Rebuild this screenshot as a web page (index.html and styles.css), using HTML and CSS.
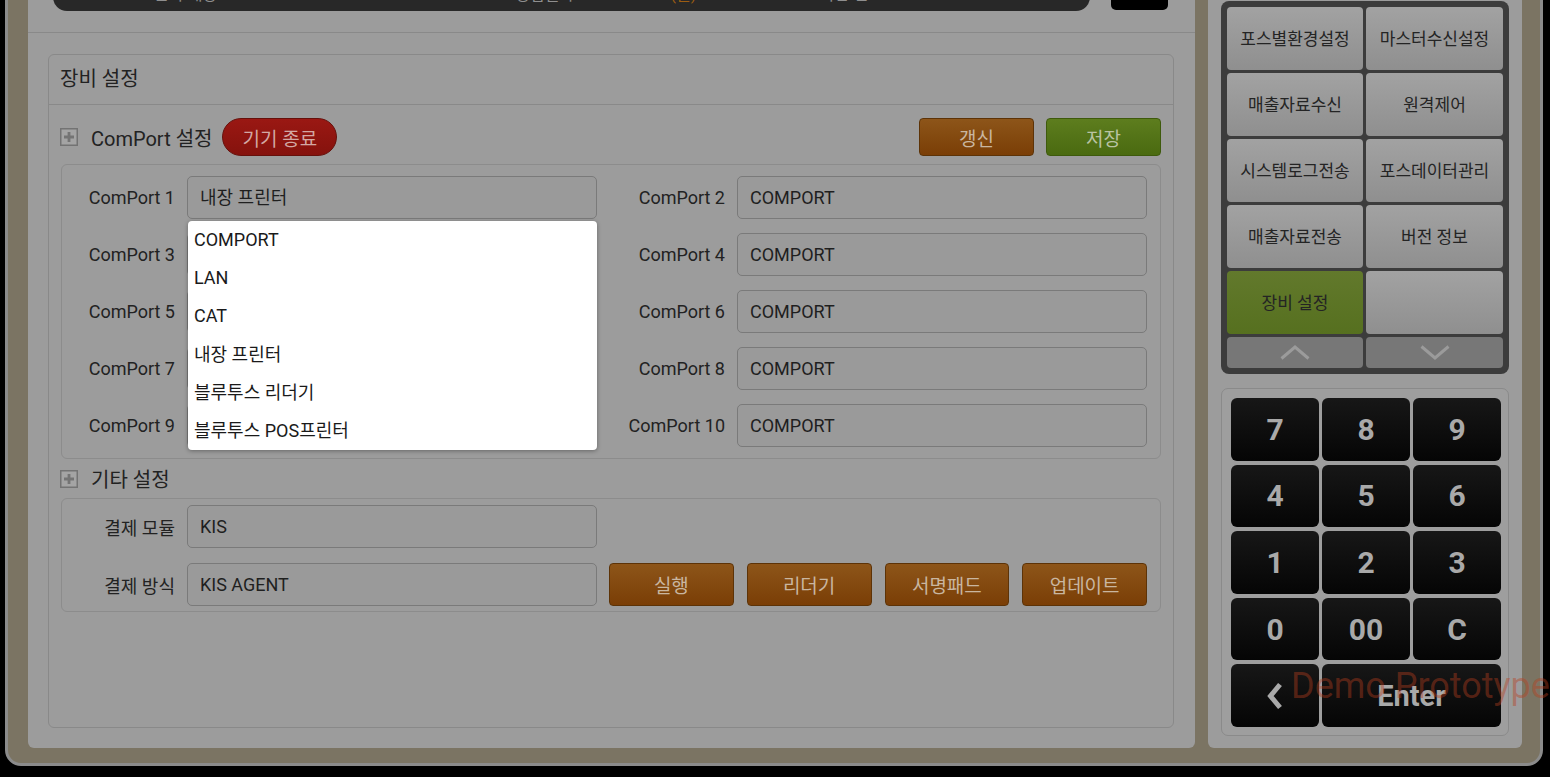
FILE: index.html
```html
<!DOCTYPE html>
<html lang="ko">
<head>
  <meta charset="UTF-8" />
  <meta name="viewport" content="width=device-width, initial-scale=1.0" />
  <title>장비 설정</title>
  <link rel="stylesheet" href="styles.css">
</head>
<body>
  <div class="frame">
    <div class="main">
      <div class="main-head">
        <div class="topbar">
          <span class="bar-left">POS 01 : 본사 매장</span>
          <span class="bar-mid">영업일자 : <em>2024-05-20 (월)</em></span>
          <span class="bar-right">마감 전</span>
        </div>
        <div class="topbox"></div>
      </div>

      <div class="panel">
        <div class="panel-title">장비 설정</div>
        <div class="panel-body">
          <div class="section-head">
            <svg class="plus" width="18" height="18" viewBox="0 0 18 18">
              <rect x="0.75" y="0.75" width="16.5" height="16.5" fill="#a4a4a4" stroke="#737373" stroke-width="1.5" />
              <path d="M9 4v10M4 9h10" stroke="#747474" stroke-width="2.8" />
            </svg>
            <span class="section-name">ComPort 설정</span>
            <button class="pill">기기 종료</button>
            <div class="head-actions">
              <button class="btn orange">갱신</button>
              <button class="btn green">저장</button>
            </div>
          </div>

          <div class="port-box">
            <label>ComPort 1</label>
            <div class="field open">내장 프린터
              <ul class="dropdown">
                <li>COMPORT</li>
                <li>LAN</li>
                <li>CAT</li>
                <li>내장 프린터</li>
                <li>블루투스 리더기</li>
                <li>블루투스 POS프린터</li>
              </ul>
            </div>
            <label>ComPort 2</label>
            <div class="field">COMPORT</div>
            <label>ComPort 3</label>
            <div class="field">COMPORT</div>
            <label>ComPort 4</label>
            <div class="field">COMPORT</div>
            <label>ComPort 5</label>
            <div class="field">COMPORT</div>
            <label>ComPort 6</label>
            <div class="field">COMPORT</div>
            <label>ComPort 7</label>
            <div class="field">COMPORT</div>
            <label>ComPort 8</label>
            <div class="field">COMPORT</div>
            <label>ComPort 9</label>
            <div class="field">COMPORT</div>
            <label>ComPort 10</label>
            <div class="field">COMPORT</div>
          </div>

          <div class="section-head plain">
            <svg class="plus" width="18" height="18" viewBox="0 0 18 18">
              <rect x="0.75" y="0.75" width="16.5" height="16.5" fill="#a4a4a4" stroke="#737373" stroke-width="1.5" />
              <path d="M9 4v10M4 9h10" stroke="#747474" stroke-width="2.8" />
            </svg>
            <span class="section-name">기타 설정</span>
          </div>

          <div class="port-box etc">
            <label>결제 모듈</label>
            <div class="field">KIS</div>
            <div></div>
            <div></div>
            <label>결제 방식</label>
            <div class="field">KIS AGENT</div>
            <div class="pay-actions">
              <button class="btn orange">실행</button>
              <button class="btn orange">리더기</button>
              <button class="btn orange">서명패드</button>
              <button class="btn orange">업데이트</button>
            </div>
          </div>
        </div>
      </div>
    </div>

    <div class="side">
      <div class="menu">
        <button class="menu-btn">포스별환경설정</button>
        <button class="menu-btn">마스터수신설정</button>
        <button class="menu-btn">매출자료수신</button>
        <button class="menu-btn">원격제어</button>
        <button class="menu-btn">시스템로그전송</button>
        <button class="menu-btn">포스데이터관리</button>
        <button class="menu-btn">매출자료전송</button>
        <button class="menu-btn">버전 정보</button>
        <button class="menu-btn active">장비 설정</button>
        <button class="menu-btn"></button>
        <button class="menu-arrow">
          <svg width="30" height="15" viewBox="0 0 30 15"><path d="M1.5 13.5L15 2l13.5 11.5" fill="none" stroke="#9b9b9b" stroke-width="3" /></svg>
        </button>
        <button class="menu-arrow">
          <svg width="30" height="15" viewBox="0 0 30 15"><path d="M1.5 1.5L15 13l13.5-11.5" fill="none" stroke="#9b9b9b" stroke-width="3" /></svg>
        </button>
      </div>

      <div class="numpad">
        <button class="key">7</button>
        <button class="key">8</button>
        <button class="key">9</button>
        <button class="key">4</button>
        <button class="key">5</button>
        <button class="key">6</button>
        <button class="key">1</button>
        <button class="key">2</button>
        <button class="key">3</button>
        <button class="key">0</button>
        <button class="key">00</button>
        <button class="key">C</button>
        <button class="key">
          <svg width="18" height="28" viewBox="0 0 18 28"><path d="M14 2.5L4.5 14 14 25.5" fill="none" stroke="#a9a9a9" stroke-width="5" /></svg>
        </button>
        <button class="key enter">Enter</button>
      </div>
    </div>
  </div>

  <div class="watermark">Demo Prototype</div>
</body>
</html>
```

FILE: styles.css
```css
body {
  margin: 0;
  width: 1550px;
  height: 777px;
  overflow: hidden;
  background-color: #000;
  font-family: Roboto, "Noto Sans CJK KR", sans-serif;
  color: #222;
}

button {
  font-family: inherit;
  border: none;
  padding: 0;
  cursor: pointer;
}

.frame {
  display: flex;
  gap: 13px;
  box-sizing: border-box;
  width: 1538px;
  height: 806px;
  margin: -40px 0 0 5px;
  padding: 12px 18px 15px 20px;
  background-color: #7b7463;
  border: 3px solid #8b8b8b;
  border-radius: 16px;
}

.main {
  width: 1167px;
  display: flex;
  flex-direction: column;
  background-color: #9c9c9c;
  border-radius: 0 0 6px 6px;
}

.main-head {
  display: flex;
  gap: 21px;
  padding: 0 27px 21px 25px;
  border-bottom: 1px solid #898989;
}

.topbar {
  flex: 1;
  height: 36px;
  display: flex;
  align-items: center;
  background-color: #282828;
  border-radius: 0 0 14px 14px;
  color: #8f8f8f;
  font-size: 16px;
}

.bar-left {
  width: 425px;
  padding-left: 37px;
}

.bar-mid {
  width: 305px;
}

.bar-mid em {
  font-style: normal;
  color: #9c5d12;
}

.topbox {
  width: 57px;
  height: 35px;
  background-color: #000;
  border-radius: 0 0 5px 5px;
}

.panel {
  flex: 1;
  margin: 21px 21px 20px 20px;
  border: 1px solid #898989;
  border-radius: 6px;
}

.panel-title {
  height: 49px;
  line-height: 49px;
  padding-left: 11px;
  font-size: 20px;
  border-bottom: 1px solid #898989;
}

.panel-body {
  padding: 0 12px;
}

.section-head {
  display: flex;
  align-items: center;
  height: 38px;
  padding: 13px 0 8px;
}

.section-head.plain {
  height: 39px;
  padding: 0;
}

.plus {
  margin-left: -1px;
  margin-right: 13px;
}

.section-name {
  font-size: 20px;
  margin-right: 10px;
}

.pill {
  width: 115px;
  height: 38px;
  border-radius: 19px;
  background: linear-gradient(#9a1813, #85120d);
  border: 1px solid #66100b;
  color: #d3a8a4;
  font-size: 19px;
}

.head-actions {
  margin-left: auto;
  display: flex;
  gap: 12px;
}

.btn {
  width: 115px;
  height: 38px;
  border-radius: 4px;
  font-size: 19px;
  color: #c9b6a0;
}

.btn.orange {
  background: linear-gradient(#8d5519, #7a3e06);
  border: 1px solid #5d3307;
}

.btn.green {
  background: linear-gradient(#5d7d1e, #4a6a10);
  border: 1px solid #3e5a0c;
  color: #b9c3a2;
}

.port-box {
  display: grid;
  grid-template-columns: 113px 410px 116px 410px;
  column-gap: 12px;
  row-gap: 14px;
  padding: 11px 12px 11px 0;
  border: 1px solid #8c8c8c;
  border-radius: 6px;
}

.port-box.etc {
  row-gap: 15px;
  padding: 6px 12px 5px 0;
}

.port-box label {
  align-self: center;
  text-align: right;
  font-size: 18px;
  color: #222;
}

.field {
  position: relative;
  box-sizing: border-box;
  height: 43px;
  line-height: 41px;
  padding-left: 12px;
  border: 1px solid #7a7a7a;
  border-radius: 5px;
  background-color: #9a9a9a;
  font-size: 18px;
  color: #1f1f1f;
}

.dropdown {
  position: absolute;
  top: 44px;
  left: 0;
  z-index: 5;
  width: 409px;
  height: 229px;
  margin: 0;
  padding: 0;
  list-style: none;
  display: flex;
  flex-direction: column;
  background-color: #fff;
  border-radius: 4px;
  box-shadow: 0 1px 4px rgba(0, 0, 0, 0.35);
}

.dropdown li {
  flex: 1;
  display: flex;
  align-items: center;
  padding-left: 6px;
  font-size: 18px;
  line-height: 1;
  color: #1a1a1a;
}

.pay-actions {
  grid-column: 3 / span 2;
  display: flex;
  gap: 13px;
}

.pay-actions .btn {
  flex: 1;
  height: 43px;
}

.side {
  width: 314px;
  box-sizing: border-box;
  display: flex;
  flex-direction: column;
  gap: 14px;
  padding: 26px 13px 12px;
  background-color: #9c9c9c;
  border-radius: 0 0 6px 6px;
}

.menu {
  display: grid;
  grid-template-columns: 136px 137px;
  grid-template-rows: repeat(5, 63px) 31px;
  gap: 3px;
  padding: 6px;
  background-color: #3c3c3c;
  border-radius: 8px;
}

.menu-btn {
  padding-bottom: 3px;
  border-radius: 4px;
  background: linear-gradient(#a2a2a2, #8f8f8f);
  font-size: 17px;
  color: #242424;
}

.menu-btn.active {
  background: linear-gradient(#62792c, #56701f);
}

.menu-arrow {
  border-radius: 4px;
  background-color: #777;
  display: flex;
  align-items: center;
  justify-content: center;
}

.numpad {
  flex: 1;
  display: grid;
  grid-template-columns: repeat(3, 88px);
  grid-template-rows: repeat(5, 1fr);
  column-gap: 3px;
  row-gap: 4px;
  padding: 9px 8px 8px 9px;
  border: 1px solid #8a8a8a;
  border-radius: 7px;
  background-color: #9e9e9e;
}

.key {
  display: flex;
  align-items: center;
  justify-content: center;
  border-radius: 6px;
  background: linear-gradient(#171717, #050505);
  color: #a9a9a9;
  font-size: 30px;
  font-weight: 700;
}

.key.enter {
  grid-column: span 2;
  font-size: 29px;
}

.watermark {
  position: absolute;
  left: 1291px;
  top: 668px;
  font-family: Roboto, sans-serif;
  font-size: 36px;
  line-height: 1;
  white-space: nowrap;
  color: rgba(185, 62, 30, 0.42);
  pointer-events: none;
}
```
